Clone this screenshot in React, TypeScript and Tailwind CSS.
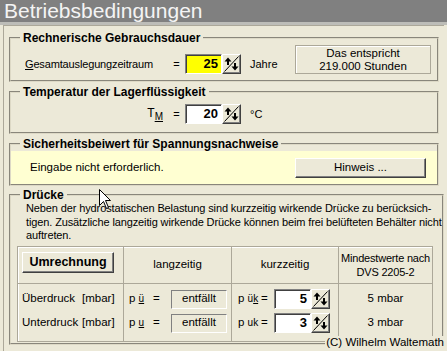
import React from "react";

const Spinner = () => (
  <div className="w-[19px] h-[20px] bg-[#ece9d8] border border-t-white border-l-white border-r-[#404040] border-b-[#404040] shadow-[inset_-1px_-1px_0_#808080] flex items-center justify-center shrink-0">
    <svg width="15" height="16" viewBox="0 0 15 16">
      <line x1="0.5" y1="15.5" x2="14.5" y2="0.5" stroke="#000" strokeWidth="1" />
      <line x1="4" y1="3" x2="4" y2="9" stroke="#000" strokeWidth="2" />
      <polygon points="0.5,5.5 4,1.5 7.5,5.5" fill="#000" />
      <line x1="11" y1="7" x2="11" y2="13" stroke="#000" strokeWidth="2" />
      <polygon points="7.5,10.5 11,14.5 14.5,10.5" fill="#000" />
    </svg>
  </div>
);

const Input = ({ value, yellow }: { value: string; yellow?: boolean }) => (
  <div className="flex shrink-0">
    <div
      className={
        "w-[37px] h-[20px] border border-t-[#808080] border-l-[#808080] border-b-white border-r-white shadow-[inset_1px_1px_0_#404040] flex items-center justify-end pr-[3px] font-bold text-[13px] " +
        (yellow ? "bg-[#ffff00]" : "bg-white")
      }
    >
      {value}
    </div>
    <Spinner />
  </div>
);

const Group = ({
  title,
  className,
  children,
}: {
  title: string;
  className: string;
  children?: React.ReactNode;
}) => (
  <fieldset
    className={
      "border-2 border-[#ddd9c6] [border-style:groove] mx-0 " + className
    }
  >
    <legend className="ml-[9px] px-[3px] font-bold text-[12px] leading-[14px] text-black">
      {title}
    </legend>
    {children}
  </fieldset>
);

const Sunken = ({ children }: { children: React.ReactNode }) => (
  <div className="w-[56px] h-[19px] border border-t-[#808080] border-l-[#808080] border-b-white border-r-white flex items-center justify-center shrink-0">
    {children}
  </div>
);

export default function App() {
  return (
    <div className="w-[447px] h-[351px] bg-[#ece9d8] flex flex-col overflow-hidden relative font-['Liberation_Sans',Arial,sans-serif] text-[11px] text-black">
      <div className="h-[22px] bg-[#808080] text-[21px] leading-[22px] text-[#f4f4f4] pl-[4px] shrink-0">
        Betriebsbedingungen
      </div>
      <div className="h-[3px] bg-[#bdbdb8] shrink-0" />
      <div className="flex-1 ml-[3px] mr-[3px] border-l border-t border-[#aca899] flex flex-col px-[5px] pt-[5px]">
        <Group title="Rechnerische Gebrauchsdauer" className="h-[51px]">
          <div className="flex items-end pl-[14px] pr-[6px] pb-[6px]">
            <div className="w-[143px] h-[20px] flex items-center tracking-[-0.15px]">
              <span>
                <span className="underline">G</span>esamtauslegungzeitraum
              </span>
            </div>
            <div className="w-[17px] h-[20px] flex items-center justify-center">=</div>
            <Input value="25" yellow />
            <div className="ml-[9px] h-[20px] flex items-center">Jahre</div>
            <div className="ml-auto w-[136px] h-[29px] border border-[#aca899] shadow-[inset_1px_1px_0_white] flex flex-col items-center justify-center text-[11.5px] leading-[13px]">
              <div>Das entspricht</div>
              <div>219.000 Stunden</div>
            </div>
          </div>
        </Group>
        <Group title="Temperatur der Lagerflüssigkeit" className="h-[49px] mt-[3px]">
          <div className="flex items-center pl-[14px] pt-[5px]">
            <div className="w-[143px] h-[20px] flex items-center justify-end pr-[5px] text-[12px]">
              <span>
                T<span className="underline text-[10px] align-[-3px]">M</span>
              </span>
            </div>
            <div className="w-[17px] h-[20px] flex items-center justify-center">=</div>
            <Input value="20" />
            <div className="ml-[9px] h-[20px] flex items-center">°C</div>
          </div>
        </Group>
        <Group title="Sicherheitsbeiwert für Spannungsnachweise" className="h-[49px] mt-[3px]">
          <div className="bg-[#ffffd2] h-[33px] flex items-center pl-[19px] pr-[11px]">
            <span className="text-[11.5px]">Eingabe nicht erforderlich.</span>
            <button className="ml-auto w-[131px] h-[20px] bg-[#ece9d8] border border-t-white border-l-white border-r-[#404040] border-b-[#404040] shadow-[inset_-1px_-1px_0_#808080] text-[11.5px]">
              Hinweis ...
            </button>
          </div>
        </Group>
        <Group title="Drücke" className="h-[157px] mt-[2px]">
          <div className="pl-[15px] text-[11px] leading-[13.5px] whitespace-nowrap tracking-[-0.12px]">
            <div>Neben der hydrostatischen Belastung sind kurzzeitig wirkende Drücke zu berücksich-</div>
            <div>tigen. Zusätzliche langzeitig wirkende Drücke können beim frei belüfteten Behälter nicht</div>
            <div>auftreten.</div>
          </div>
          <div className="ml-[6px] mt-[3px] w-[416px] border border-[#aca899] shadow-[inset_1px_1px_0_white] grid grid-cols-[106px_108px_107px_93px] grid-rows-[37px_57px] whitespace-nowrap">
            <div className="border-r border-b border-[#aca899] flex items-start pl-[4px] pt-[5px]">
              <button className="w-[92px] h-[21px] bg-[#ece9d8] border border-t-white border-l-white border-r-[#404040] border-b-[#404040] shadow-[inset_-1px_-1px_0_#808080] font-bold text-[12.5px]">
                Umrechnung
              </button>
            </div>
            <div className="border-r border-b border-[#aca899] flex items-center justify-center text-[11.5px]">
              langzeitig
            </div>
            <div className="border-r border-b border-[#aca899] flex items-center justify-center text-[11.5px]">
              kurzzeitig
            </div>
            <div className="border-b border-[#aca899] flex flex-col items-center justify-center text-[11px] leading-[14px] tracking-[-0.2px]">
              <div>Mindestwerte nach</div>
              <div>DVS 2205-2</div>
            </div>
            <div className="border-r border-[#aca899] flex flex-col pl-[4px] pt-[6px] gap-[5px] text-[11.5px]">
              <div className="h-[19px] flex items-center">
                <span className="w-[60px]">Überdruck</span>
                <span>[mbar]</span>
              </div>
              <div className="h-[19px] flex items-center">
                <span className="w-[60px]">Unterdruck</span>
                <span>[mbar]</span>
              </div>
            </div>
            <div className="border-r border-[#aca899] flex flex-col pl-[5px] pt-[6px] gap-[5px] text-[11.5px]">
              <div className="h-[19px] flex items-center">
                <span className="w-[24px] shrink-0">
                  p <span className="underline text-[10px]">ü</span>
                </span>
                <span className="w-[18px] shrink-0">=</span>
                <Sunken>entfällt</Sunken>
              </div>
              <div className="h-[19px] flex items-center">
                <span className="w-[24px] shrink-0">
                  p <span className="underline text-[10px]">u</span>
                </span>
                <span className="w-[18px] shrink-0">=</span>
                <Sunken>entfällt</Sunken>
              </div>
            </div>
            <div className="border-r border-[#aca899] flex flex-col pl-[6px] pt-[6px] gap-[5px] text-[11.5px]">
              <div className="h-[19px] flex items-center">
                <span className="w-[21px] shrink-0">
                  p <span className="text-[10px]">ü<span className="underline">k</span></span>
                </span>
                <span className="w-[15px] shrink-0 pl-[2px]">=</span>
                <Input value="5" />
              </div>
              <div className="h-[19px] flex items-center">
                <span className="w-[21px] shrink-0">
                  p <span className="text-[10px]">uk</span>
                </span>
                <span className="w-[15px] shrink-0 pl-[2px]">=</span>
                <Input value="3" />
              </div>
            </div>
            <div className="flex flex-col items-center pt-[6px] gap-[5px] text-[11.5px]">
              <div className="h-[19px] flex items-center">5 mbar</div>
              <div className="h-[19px] flex items-center">3 mbar</div>
            </div>
          </div>
        </Group>
      </div>
      <div className="absolute right-[2px] bottom-[3px] bg-[#ece9d8] text-[11.5px] leading-[12px] px-[1px]">
        (C) Wilhelm Waltemath
      </div>
      <svg
        className="absolute left-[99px] top-[189px]"
        width="13"
        height="21"
        viewBox="0 0 13 21"
      >
        <polygon
          points="0.5,0.5 0.5,16.5 4.5,12.5 7.5,19.5 9.5,18.5 6.5,11.5 11.5,11.5"
          fill="#fff"
          stroke="#000"
          strokeWidth="1"
        />
      </svg>
    </div>
  );
}
